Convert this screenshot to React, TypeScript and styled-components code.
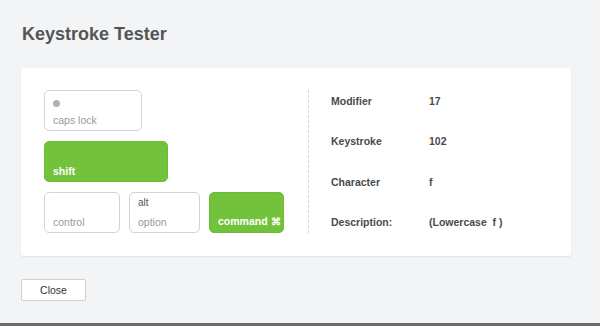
import React from "react";
import styled, { createGlobalStyle } from "styled-components";

const GlobalStyle = createGlobalStyle`
  html, body {
    margin: 0;
    padding: 0;
    background: #f3f4f6;
  }
  body {
    font-family: "Liberation Sans", Arial, Helvetica, sans-serif;
  }
`;

interface KeyProps {
  active?: boolean;
  width: number;
}

interface InfoItem {
  label: string;
  value: string;
}

const info: InfoItem[] = [
  { label: "Modifier", value: "17" },
  { label: "Keystroke", value: "102" },
  { label: "Character", value: "f" },
  { label: "Description:", value: "(Lowercase\u00a0 f )" },
];

export default function App() {
  return (
    <>
      <GlobalStyle />
      <Page>
        <Title>Keystroke Tester</Title>
        <Panel>
          <Keyboard>
            <KeyRow>
              <Key width={98}>
                <Dot />
                <KeyLabel>caps lock</KeyLabel>
              </Key>
            </KeyRow>
            <KeyRow>
              <Key width={124} active>
                <span />
                <KeyLabel active>shift</KeyLabel>
              </Key>
            </KeyRow>
            <KeyRow>
              <Key width={76}>
                <span />
                <KeyLabel>control</KeyLabel>
              </Key>
              <Key width={71}>
                <AltLabel>alt</AltLabel>
                <KeyLabel>option</KeyLabel>
              </Key>
              <Key width={75} active>
                <span />
                <KeyLabel active>
                  command <Cmd>⌘</Cmd>
                </KeyLabel>
              </Key>
            </KeyRow>
          </Keyboard>
          <InfoColumn>
            {info.map((item) => (
              <InfoRow key={item.label}>
                <InfoLabel>{item.label}</InfoLabel>
                <InfoValue>{item.value}</InfoValue>
              </InfoRow>
            ))}
          </InfoColumn>
        </Panel>
        <CloseButton>Close</CloseButton>
        <Spacer />
        <BottomStrip />
      </Page>
    </>
  );
}

const Page = styled.div`
  height: 326px;
  box-sizing: border-box;
  display: flex;
  flex-direction: column;
  align-items: flex-start;
  padding: 23px 29px 0 21px;
  overflow: hidden;
`;

const Title = styled.h1`
  margin: 0 0 23px 1px;
  font-size: 18px;
  line-height: 22px;
  font-weight: 700;
  color: #555;
`;

const Panel = styled.div`
  align-self: stretch;
  height: 188px;
  box-sizing: border-box;
  display: flex;
  padding: 22px 23px 23px;
  background: #fff;
  border-radius: 3px;
  box-shadow: 0 1px 2px rgba(0, 0, 0, 0.08);
`;

const Keyboard = styled.div`
  width: 241px;
  margin-right: 23px;
  display: flex;
  flex-direction: column;
  gap: 10px;
`;

const KeyRow = styled.div`
  display: flex;
  gap: 9px;
`;

const Key = styled.div<KeyProps>`
  width: ${(p) => p.width}px;
  height: 41px;
  box-sizing: border-box;
  display: flex;
  flex-direction: column;
  justify-content: space-between;
  padding: 4px 6px 4px 8px;
  border-radius: 5px;
  border: 1px solid ${(p) => (p.active ? "#6cbd35" : "#d4d4d4")};
  background: ${(p) => (p.active ? "#72c23b" : "#fff")};
`;

const Dot = styled.span`
  display: block;
  width: 7px;
  height: 7px;
  margin: 5px 0 0 0;
  border-radius: 50%;
  background: #b0b0b0;
`;

const KeyLabel = styled.span<{ active?: boolean }>`
  font-size: 10.5px;
  line-height: 12px;
  white-space: nowrap;
  font-weight: ${(p) => (p.active ? 700 : 400)};
  color: ${(p) => (p.active ? "#fff" : "#999")};
`;

const Cmd = styled.span`
  font-size: 10px;
`;

const AltLabel = styled.span`
  font-size: 10px;
  line-height: 12px;
  color: #555;
`;

const InfoColumn = styled.div`
  flex: 1;
  border-left: 1px dashed #d6d6d6;
  padding-left: 22px;
  display: flex;
  flex-direction: column;
  gap: 19px;
`;

const InfoRow = styled.div`
  height: 22px;
  display: flex;
  align-items: center;
`;

const InfoLabel = styled.span`
  width: 98px;
  font-size: 10.5px;
  font-weight: 700;
  color: #4a4a4a;
`;

const InfoValue = styled.span`
  font-size: 10.5px;
  font-weight: 700;
  color: #4a4a4a;
`;

const CloseButton = styled.button`
  margin-top: 23px;
  width: 65px;
  height: 22px;
  padding: 0;
  background: #fff;
  border: 1px solid #cfcfcf;
  border-radius: 2px;
  font-family: "Liberation Sans", Arial, Helvetica, sans-serif;
  font-size: 10.5px;
  color: #333;
  cursor: pointer;
`;

const Spacer = styled.div`
  flex: 1;
`;

const BottomStrip = styled.div`
  align-self: stretch;
  margin: 0 -29px 0 -21px;
  height: 3px;
  background: #6b6b6b;
`;
